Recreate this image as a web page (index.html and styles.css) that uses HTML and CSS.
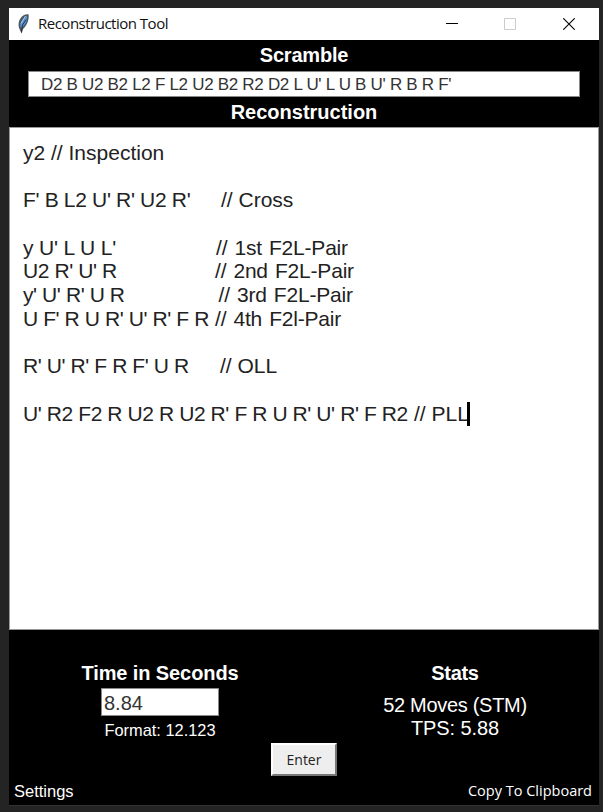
FILE: index.html
```html
<!DOCTYPE html>
<html lang="en">
<head>
<meta charset="utf-8">
<title>Reconstruction Tool</title>
<link rel="stylesheet" href="styles.css">
</head>
<body>
<main class="window">
  <header class="titlebar">
    <svg class="feather" width="14" height="22" viewBox="0 0 14 22"><path d="M2.500 16C.5 11 2 6.500 5 3.500 7.500 1 10.500.8 11.600 1.500 12.200 6 10.500 12 6 16l-1.500 4.500z" fill="#4b5661"/><path d="M3.500 14C2.500 10 5 6 10 2.800 10.700 7 8.500 11.500 5 14.500z" fill="#5594d8"/><path d="M8.500 3 4 10.500" stroke="#b4cce4"/><path d="M9 6.500 5.500 12 4.500 19.500" fill="none" stroke="#1b232c" stroke-width=".8"/></svg>
    <h1 class="title"><span class="t-title">Reconstruction Tool</span></h1>
    <div class="controls">
      <svg width="12" height="12" viewBox="0 0 12 12"><path d="M0 5.500h12" stroke="#000"/></svg>
      <svg width="12" height="12" viewBox="0 0 12 12"><path d="M.5.5h11v11H.5z" fill="none" stroke="#ccc"/></svg>
      <svg width="12" height="12" viewBox="0 0 12 12"><path d="m.3.3 11.400 11.400m0-11.400L.3 11.700" stroke="#000" stroke-width="1.100"/></svg>
    </div>
  </header>
  <section class="scramble">
    <h2><span class="t-scramble">Scramble</span></h2>
    <div class="field"><span class="t-moves">D2 B U2 B2 L2 F L2 U2 B2 R2 D2 L U' L U B U' R B R F'</span></div>
    <h2><span class="t-recon">Reconstruction</span></h2>
  </section>
  <section class="editor">
    <p><span>y2 // Inspection</span></p>
    <p></p>
    <p><span class="moves m-cross">F' B L2 U' R' U2 R'</span><span>// Cross</span></p>
    <p></p>
    <p><span class="moves m-first">y U' L U L'</span><span class="pair">// 1st F2L-Pair</span></p>
    <p><span class="moves m-second">U2 R' U' R</span><span class="pair">// 2nd F2L-Pair</span></p>
    <p><span class="moves m-third">y' U' R' U R</span><span class="pair">// 3rd F2L-Pair</span></p>
    <p><span class="moves m-fourth">U F' R U R' U' R' F R</span><span class="pair">// 4th F2l-Pair</span></p>
    <p></p>
    <p><span class="moves m-oll">R' U' R' F R F' U R</span><span>// OLL</span></p>
    <p></p>
    <p><span class="moves m-pll">U' R2 F2 R U2 R U2 R' F R U R' U' R' F R2</span><span>// PLL</span><i class="caret"></i></p>
  </section>
  <footer class="panel">
    <div class="summary">
      <div class="time">
        <h2><span class="t-time">Time in Seconds</span></h2>
        <div class="entry"><span>8.84</span></div>
        <div class="format"><span>Format: 12.123</span></div>
      </div>
      <div class="stats">
        <h2><span class="t-stats">Stats</span></h2>
        <div class="result"><span class="count">52 Moves (STM)</span><span class="tps">TPS: 5.88</span></div>
      </div>
    </div>
    <button class="enter"><span>Enter</span></button>
    <div class="links"><span class="settings">Settings</span><span class="copy">Copy To Clipboard</span></div>
  </footer>
</main>
</body>
</html>
```
FILE: styles.css
```css
* { box-sizing: border-box; }
body { margin: 0; height: 812px; overflow: hidden; background: #242424; padding: 8px 4px 6px 9px; font-family: "Liberation Sans", Arial, sans-serif; }
.window { width: 590px; height: 798px; background: #000; border-bottom: 1px solid #333; display: flex; flex-direction: column; }
h1, h2, p { margin: 0; font-weight: normal; }
span { white-space: pre; }
.titlebar { height: 32px; flex: none; background: #fff; display: flex; align-items: center; padding: 0 24px 0 8px; }
.feather { margin: 0 7px 0 0; }
.title { font: 15px/30px "Open Sans", "Noto Sans", sans-serif; flex: 1; color: #111; padding-bottom: 2px; }
.t-title { letter-spacing: -.5px; }
.controls { display: flex; gap: 46px; }
.controls svg { display: block; }
.controls svg:first-child, .controls svg:nth-child(2) { margin-left: -1px; margin-right: 1px; }
.scramble { height: 87px; flex: none; padding: 0 19px; text-align: center; }
h2 { font-size: 20px; line-height: 31px; height: 31px; font-weight: bold; color: #fff; }
.t-scramble { letter-spacing: -.2px; }
.field { height: 26px; border: 1px solid #888; background: #fff; color: #333; text-align: left; padding-left: 12px; font-size: 17px; line-height: 25px; }
.t-moves { letter-spacing: -.3px; }
.scramble h2:last-child { line-height: 30px; }
.editor { height: 503px; flex: none; background: #fff; border: 1px solid #999; padding: 13px; color: #222; font-size: 21px; line-height: 23.7px; }
.editor p { height: 23.7px; display: flex; }
.editor .moves { flex: none; letter-spacing: -.41px; }
.editor .m-cross { width: 198px; letter-spacing: -.33px; }
.editor .m-first { width: 193px; letter-spacing: -.15px; }
.m-second { width: 192px; }
.m-third { width: 195.500px; }
.m-fourth { width: 192px; }
.m-oll { width: 197px; }
.m-pll { width: 391px; }
.editor .pair { word-spacing: 1.500px; letter-spacing: -.2px; }
.caret { width: 3px; height: 24px; background: #000; margin-left: -2px; }
.panel { flex: 1; color: #fff; display: flex; flex-direction: column; }
.summary { height: 113px; display: grid; grid-template-columns: 302px 1fr; text-align: center; padding-top: 27px; }
.summary h2 { line-height: 32px; }
.t-time { letter-spacing: -.1px; }
.t-stats { letter-spacing: -.3px; }
.entry { width: 118px; height: 28px; margin: 0 auto; background: #fff; border: 1px solid #888; color: #333; text-align: left; padding-left: 2px; font-size: 20px; line-height: 28px; }
.format { font-size: 16.400px; line-height: 29px; }
.result { display: flex; flex-direction: column; font-size: 20px; line-height: 23px; padding-top: 6px; letter-spacing: -.3px; }
.tps { letter-spacing: -.1px; }
.enter { margin: 0 0 0 262px; width: 66px; height: 33px; padding: 0; border: 2px solid; border-color: #fff #777 #777 #fff; background: #eee; color: #222; font: 14px/26px "Open Sans", sans-serif; }
.links { display: flex; justify-content: space-between; padding: 3px 7px 0 5px; line-height: 24px; }
.settings { font-size: 16.500px; }
.copy { font: 14.500px/24px "Open Sans", sans-serif; }
```
